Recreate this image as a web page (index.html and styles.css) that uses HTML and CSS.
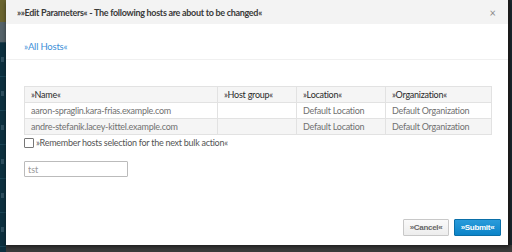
FILE: index.html
```html
<!DOCTYPE html>
<html lang="en">
<head>
    <meta charset="UTF-8">
    <title>Edit Parameters</title>
    <link rel="stylesheet" href="styles.css">
</head>
<body>
    <div class="backdrop">
        <div class="side-nav">
            <div class="nav-item nav-top"></div>
            <div class="nav-item nav-active"></div>
            <div class="nav-item"></div>
            <div class="nav-item"></div>
            <div class="nav-item"></div>
            <div class="nav-item"></div>
            <div class="nav-item"></div>
            <div class="nav-item"></div>
        </div>

        <div class="modal">
            <div class="modal-header">
                <div class="modal-title">»»Edit Parameters« - The following hosts are about to be changed«</div>
                <span class="modal-close">×</span>
            </div>

            <div class="modal-body">
                <div class="nav-links">
                    <a class="link" href="#">»All Hosts«</a>
                </div>

                <table class="hosts-table">
                    <thead>
                        <tr>
                            <th class="col-name">»Name«</th>
                            <th class="col-group">»Host group«</th>
                            <th class="col-loc">»Location«</th>
                            <th>»Organization«</th>
                        </tr>
                    </thead>
                    <tbody>
                        <tr>
                            <td>aaron-spraglin.kara-frias.example.com</td>
                            <td></td>
                            <td>Default Location</td>
                            <td>Default Organization</td>
                        </tr>
                        <tr>
                            <td>andre-stefanik.lacey-kittel.example.com</td>
                            <td></td>
                            <td>Default Location</td>
                            <td>Default Organization</td>
                        </tr>
                    </tbody>
                </table>

                <label class="remember">
                    <span class="checkbox"></span>
                    »Remember hosts selection for the next bulk action«
                </label>

                <input class="text-input" type="text" placeholder="tst">

                <div class="modal-footer">
                    <button class="btn btn-default">»Cancel«</button>
                    <button class="btn btn-primary">»Submit«</button>
                </div>
            </div>
        </div>
    </div>
</body>
</html>
```

FILE: styles.css
```css
body {
    margin: 0;
    padding: 0;
    background: #3a3b3c;
    font-family: Lato, 'Open Sans', sans-serif;
    overflow: hidden;
}

.backdrop {
    width: 512px;
    height: 252px;
    display: flex;
    background: linear-gradient(to bottom, #1b2a31 0, #1b2a31 245px, #3b3b3b 245px);
}

.side-nav {
    width: 6px;
    background: #0d3140;
    display: flex;
    flex-direction: column;
    overflow: hidden;
}

.nav-item {
    height: 33px;
    flex-shrink: 0;
    border-bottom: 1px solid #1a4556;
    background: linear-gradient(to right, #0d3140 0, #0d3140 1px, #2f5060 1px, #2f5060 4px, #0d3140 4px);
    background-size: 6px 5px;
    background-position: 0 14px;
    background-repeat: no-repeat;
}

.nav-item.nav-top {
    height: 22px;
    background: #6b6530;
    border: none;
}

.nav-item.nav-active {
    height: 20px;
    background: #56636a;
    border-bottom: 1px solid #23404d;
}

.modal {
    width: 502px;
    height: 245px;
    background: #fff;
    border-right: 2px solid #1a1a1a;
    display: flex;
    flex-direction: column;
    box-shadow: 0 2px 4px rgba(0, 0, 0, 0.5);
}

.modal-header {
    height: 24px;
    background: #f3f3f3;
    display: flex;
    align-items: center;
    justify-content: space-between;
    padding: 0 11px;
    flex-shrink: 0;
}

.modal-title {
    font-size: 9px;
    color: #3a3a3a;
    font-weight: bold;
    letter-spacing: -0.3px;
}

.modal-close {
    color: #8a8a8a;
    font-size: 11px;
    margin-right: 1px;
}

.modal-body {
    flex: 1;
    padding: 0 14px 0 18px;
    display: flex;
    flex-direction: column;
}

.nav-links {
    height: 35px;
    border-bottom: 1px solid #f0f0f0;
    margin: 0 -14px 0 -18px;
    padding: 0 18px;
    display: flex;
    align-items: flex-end;
}

.link {
    color: #3c8fd8;
    text-decoration: none;
    font-size: 9.5px;
    letter-spacing: -0.2px;
    margin-bottom: 7px;
}

.hosts-table {
    margin-top: 26px;
    border-collapse: collapse;
    width: 468px;
    font-size: 9px;
    letter-spacing: -0.25px;
}

.hosts-table th,
.hosts-table td {
    border: 1px solid #e2e2e2;
    height: 15px;
    padding: 0 6px;
    text-align: left;
    white-space: nowrap;
}

.hosts-table th {
    font-weight: normal;
    color: #2a2a2a;
    background: #f5f5f5;
}

.hosts-table td {
    color: #717171;
}

.hosts-table tbody tr:nth-child(2) {
    background: #f5f5f5;
}

.col-name {
    width: 180px;
}

.col-group {
    width: 66px;
}

.col-loc {
    width: 76px;
}

.remember {
    display: flex;
    align-items: center;
    gap: 2px;
    font-size: 9px;
    letter-spacing: -0.27px;
    color: #555;
    margin-top: 2px;
}

.checkbox {
    width: 8px;
    height: 8px;
    border: 1px solid #777;
    border-radius: 1px;
    background: #fff;
}

.text-input {
    margin-top: 13px;
    width: 104px;
    height: 16px;
    box-sizing: border-box;
    border: 1px solid #bbb;
    border-radius: 1px;
    padding: 0 3px;
    font-family: inherit;
    font-size: 9px;
    outline: none;
}

.text-input::placeholder {
    color: #9a9a9a;
}

.modal-footer {
    margin-top: auto;
    margin-bottom: 9px;
    display: flex;
    justify-content: flex-end;
    gap: 5px;
    margin-right: -7px;
}

.btn {
    height: 17px;
    font-family: 'Liberation Sans', Arial, sans-serif;
    font-size: 8px;
    font-weight: bold;
    letter-spacing: -0.3px;
    padding: 0;
    border-radius: 1px;
    cursor: pointer;
}

.btn-default {
    width: 46px;
    color: #666;
    background: linear-gradient(#fafafa, #ededed);
    border: 1px solid #c8c8c8;
}

.btn-primary {
    width: 47px;
    color: #fff;
    background: linear-gradient(#2a9bdb, #0b84c8);
    border: 1px solid #0a6fa8;
}
```
